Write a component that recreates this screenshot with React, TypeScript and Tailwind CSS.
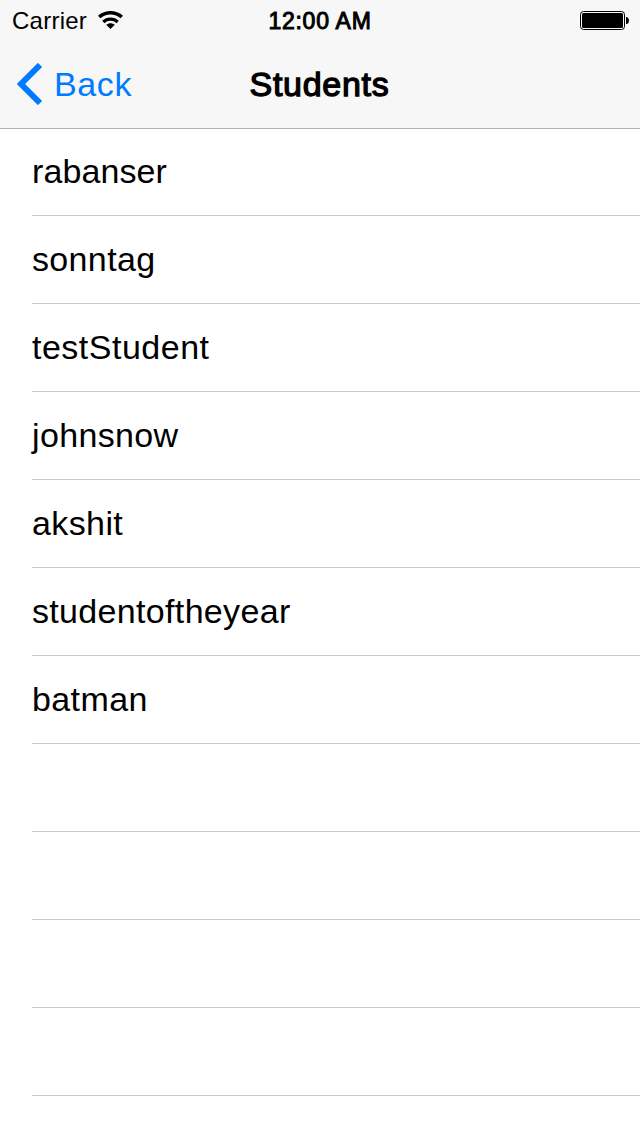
const students = [
  { name: "rabanser", spacing: "tracking-[0.1px]" },
  { name: "sonntag", spacing: "tracking-[0.35px]" },
  { name: "testStudent", spacing: "tracking-[0.5px]" },
  { name: "johnsnow", spacing: "tracking-[0.35px]" },
  { name: "akshit", spacing: "tracking-[0.4px]" },
  { name: "studentoftheyear", spacing: "tracking-[0.33px]" },
  { name: "batman", spacing: "tracking-[0.4px]" },
];
const emptyRows = [0, 1, 2, 3];

function WifiIcon() {
  return (
    <svg className="-mt-px" width="25" height="18" viewBox="0 0 25 18">
      <path d="M1.2 6.1C7.4 0.2 17.6 0.2 23.8 6.1" fill="none" stroke="black" strokeWidth="3.4" />
      <path d="M5.3 11C9.2 7.1 15.8 7.1 19.7 11" fill="none" stroke="black" strokeWidth="3.2" />
      <path d="M8.2 13.8C10.6 11.6 14.4 11.6 16.8 13.8L12.5 18Z" />
    </svg>
  );
}

function BatteryIcon() {
  return (
    <svg width="49" height="19" viewBox="0 0 49 19">
      <rect x="0.5" y="0.5" width="44" height="18" rx="3" fill="none" stroke="black" />
      <rect x="2" y="2" width="41" height="15" rx="1.5" />
      <path d="M46 6h1q2 1 2 3.5T47 13h-1Z" />
    </svg>
  );
}

export default function App() {
  return (
    <div className="h-[1136px] w-[640px] overflow-hidden bg-white font-['Liberation_Sans',sans-serif] text-black">
      <header className="h-[129px] border-b border-[#b2b2b2] bg-[#f7f7f7]">
        <div className="grid h-10 grid-cols-3 items-center pr-[11px] pl-3">
          <div className="flex items-center gap-[11px]">
            <span className="mt-0.5 text-[24px] leading-8 tracking-[0.25px]">Carrier</span>
            <WifiIcon />
          </div>
          <span className="mt-0.5 -ml-px text-center text-[23px] leading-8 tracking-[0.75px] [-webkit-text-stroke:1px_black]">12:00 AM</span>
          <div className="flex justify-end">
            <BatteryIcon />
          </div>
        </div>
        <div className="grid h-[88px] grid-cols-3 items-center px-4">
          <div className="flex items-center gap-[11px] text-[#007aff]">
            <svg width="27" height="42" viewBox="0 0 27 42">
              <path d="M24 2L5 21L24 40" fill="none" stroke="currentColor" strokeWidth="6" />
            </svg>
            <span className="text-[34px] tracking-[0.6px]">Back</span>
          </div>
          <h1 className="-ml-px text-center text-[34px] tracking-[0.7px] [-webkit-text-stroke:1.3px_black]">Students</h1>
        </div>
      </header>
      <ul className="-mt-px pl-8 text-[34px]">
        {students.map(({ name, spacing }) => (
          <li key={name} className="flex h-[88px] items-center border-b border-[#c8c7cc]">
            <span className={spacing}>{name}</span>
          </li>
        ))}
        {emptyRows.map((row) => (
          <li key={row} className="h-[88px] border-b border-[#c8c7cc]" />
        ))}
      </ul>
    </div>
  );
}
